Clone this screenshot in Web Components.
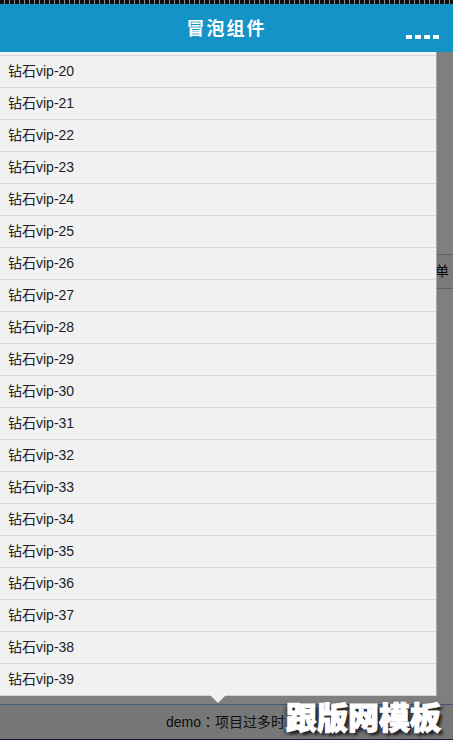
<!DOCTYPE html>
<html lang="zh">
<head>
<meta charset="utf-8">
<title>冒泡组件</title>
<style>
  html, body { margin: 0; height: 100%; overflow: hidden; }
  body { font: 14px "Liberation Sans", "Noto Sans CJK SC", sans-serif; }
</style>
</head>
<body>
<demo-app>
  <nav-bar slot="top">冒泡组件</nav-bar>
  <page-behind slot="behind" lang="zh-TW">demo：项目过多时</page-behind>
  <bubble-pop slot="pop" id="pop"></bubble-pop>
  <water-mark slot="mark">跟版网模板</water-mark>
</demo-app>

<script>
customElements.define(
  "demo-app",
  class extends HTMLElement {
    constructor() {
      super();
      this.attachShadow({ mode: "open" }).innerHTML = `
<style>
  :host { display: flex; flex-direction: column; height: 740px; width: 453px; overflow: hidden; }
  #body { position: relative; flex: 1; min-height: 0; overflow: hidden; }
  #shade { position: absolute; inset: 0; background: rgba(0, 0, 0, 0.5); }
</style>
<slot name="top"></slot>
<div id="body">
  <slot name="behind"></slot>
  <div id="shade"></div>
  <slot name="pop"></slot>
  <slot name="mark"></slot>
</div>`;
    }
  }
);

customElements.define(
  "nav-bar",
  class extends HTMLElement {
    constructor() {
      super();
      this.attachShadow({ mode: "open" }).innerHTML = `
<style>
  :host { display: block; }
  #strip {
    height: 4px;
    background: repeating-linear-gradient(90deg, #111 0 4px, #8a8a8a 4px 5px);
  }
  #bar {
    height: 48px;
    background: #1493c7;
    display: grid;
    grid-template-columns: 1fr auto 1fr;
    align-items: center;
    color: #fff;
  }
  #title {
    grid-column: 2;
    font: bold 18px "Noto Sans CJK SC", sans-serif;
    letter-spacing: 2px;
    line-height: 48px;
    margin-top: -2px;
  }
  #dots {
    grid-column: 3;
    justify-self: end;
    align-self: end;
    display: flex;
    gap: 3px;
    padding: 0 14px 13px 0;
  }
  #dots i { width: 6px; height: 4px; background: #fff; }
</style>
<div id="strip"></div>
<div id="bar">
  <div id="title"><slot></slot></div>
  <div id="dots"><i></i><i></i><i></i><i></i></div>
</div>`;
    }
  }
);

customElements.define(
  "page-behind",
  class extends HTMLElement {
    constructor() {
      super();
      this.attachShadow({ mode: "open" }).innerHTML = `
<style>
  :host { display: flex; flex-direction: column; justify-content: space-between; height: 100%; background: #fff; }
  #menu {
    margin-top: 202px;
    height: 33px;
    border-top: 1px solid #c0c0c0;
    border-bottom: 1px solid #c0c0c0;
    background: #f6f6f6;
    line-height: 33px;
    text-align: right;
    padding-right: 4px;
    color: #111;
  }
  #foot {
    height: 34px;
    border-top: 1px solid #78b4ff;
    border-bottom: 1px solid #1f3f70;
    background: #eee;
    color: #222;
    font-family: "Liberation Sans", "Noto Sans CJK TC", sans-serif;
    line-height: 34px;
    padding-left: 166px;
    white-space: nowrap;
  }
</style>
<div id="menu">弹出菜单</div>
<div id="foot"><slot></slot></div>`;
    }
  }
);

customElements.define(
  "pop-row",
  class extends HTMLElement {
    constructor() {
      super();
      this.attachShadow({ mode: "open" }).innerHTML = `
<style>
  :host {
    display: block;
    height: 31px;
    line-height: 31px;
    border-top: 1px solid #d8d8d8;
    padding-left: 8px;
    color: #222;
  }
</style>
<slot></slot>`;
    }
  }
);

customElements.define(
  "bubble-pop",
  class extends HTMLElement {
    constructor() {
      super();
      this.attachShadow({ mode: "open" }).innerHTML = `
<style>
  :host {
    position: absolute;
    left: 0;
    top: 0;
    width: 437px;
    height: 644px;
    box-sizing: border-box;
    padding-top: 3px;
    background: #f1f1f1;
    border-right: 1px solid #a8a8a8;
    border-bottom: 1px solid #d0d0d0;
  }
  #arrow {
    position: absolute;
    left: 210px;
    top: 100%;
    width: 0;
    height: 0;
    border-left: 8px solid transparent;
    border-right: 8px solid transparent;
    border-top: 8px solid #f1f1f1;
  }
</style>
<slot></slot>
<div id="arrow"></div>`;
    }
    connectedCallback() {
      for (let i = 20; i < 40; i++) {
        const row = document.createElement("pop-row");
        row.textContent = "钻石vip-" + i;
        this.appendChild(row);
      }
    }
  }
);

customElements.define(
  "water-mark",
  class extends HTMLElement {
    constructor() {
      super();
      this.attachShadow({ mode: "open" }).innerHTML = `
<style>
  :host {
    position: absolute;
    right: 12px;
    bottom: 6px;
    font: 900 31px/36px "Noto Sans CJK SC", sans-serif;
    color: #fff;
    -webkit-text-stroke: 1px #fff;
    text-shadow: 3px 3px 3px #222, -2px 2px 4px #333;
    white-space: nowrap;
  }
</style>
<slot></slot>`;
    }
  }
);
</script>
</body>
</html>
